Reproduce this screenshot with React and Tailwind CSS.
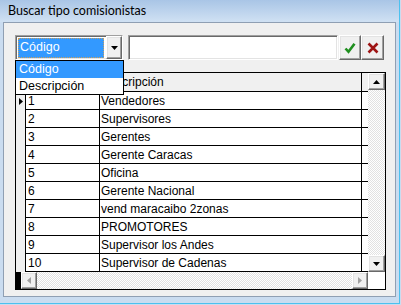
import React from 'react';

const rows = [
  ['1', 'Vendedores'],
  ['2', 'Supervisores'],
  ['3', 'Gerentes'],
  ['4', 'Gerente Caracas'],
  ['5', 'Oficina'],
  ['6', 'Gerente Nacional'],
  ['7', 'vend maracaibo 2zonas'],
  ['8', 'PROMOTORES'],
  ['9', 'Supervisor los Andes'],
  ['10', 'Supervisor de Cadenas'],
];

const sunken =
  'border border-t-[#a0a0a0] border-l-[#a0a0a0] border-b-white border-r-white shadow-[inset_1px_1px_0_#696969,inset_-1px_-1px_0_#e3e3e3]';
const raised =
  'border border-t-white border-l-white border-b-[#696969] border-r-[#696969] shadow-[inset_-1px_-1px_0_#a0a0a0,inset_1px_1px_0_#e3e3e3] bg-[#f0f0f0]';
const checker = 'bg-[repeating-conic-gradient(#ffffff_0_25%,#e2e2e2_0_50%)] bg-[length:2px_2px]';

const Tri = ({ dir, color = '#000' }) => {
  const pts = {
    up: '0,4 7,4 3.5,0',
    down: '0,0 7,0 3.5,4',
  };
  if (dir === 'left' || dir === 'right') {
    return (
      <svg width="4" height="7" viewBox="0 0 4 7">
        <polygon points={dir === 'left' ? '4,0 4,7 0,3.5' : '0,0 0,7 4,3.5'} fill={color} />
      </svg>
    );
  }
  return (
    <svg width="7" height="4" viewBox="0 0 7 4">
      <polygon points={pts[dir]} fill={color} />
    </svg>
  );
};

const App = () => {
  return (
    <div className="w-[401px] h-[305px] bg-[#cadcf0] pr-px pb-px font-['Liberation_Sans',Arial,sans-serif] text-black">
      <div className="h-full flex flex-col border-r border-b border-[#4cc1ef]">
        <div className="h-[22px] shrink-0 bg-linear-to-b from-[#a9c5e6] to-[#d0e1f3] pl-[8px] pt-[2px] text-[12.5px] leading-[17px] font-['Lato',sans-serif]">
          Buscar tipo comisionistas
        </div>
        <div className="flex-1 flex px-[3px] pb-[6px]">
          <div className="flex-1 bg-[#f0f0f0] border border-[#8f9fb3] pl-[11px] pt-[12px]">
            {/* toolbar */}
            <div className="flex h-[25px]">
              <div className={`relative w-[108px] bg-white flex ${sunken}`}>
                <div className="flex-1 ml-[2px] mt-[2px] mb-[1px] mr-[2px] bg-[#3399ff] border border-dotted border-[#c8a060] text-white text-[12.5px] leading-[17px] pl-[1px]">
                  Código
                </div>
                <div className={`w-[16px] flex items-center justify-center ${raised}`}>
                  <Tri dir="down" />
                </div>
                <div className="absolute left-[-1px] top-[24px] w-[109px] bg-white border border-black z-10 text-[12.5px]">
                  <div className="h-[17px] bg-[#3399ff] text-white leading-[17px] pl-[3px]">Código</div>
                  <div className="h-[16px] leading-[16px] pl-[3px]">Descripción</div>
                </div>
              </div>
              <div className={`ml-[5px] w-[210px] bg-white ${sunken}`} />
              <button className={`ml-[1px] w-[22px] flex items-center justify-center ${raised}`}>
                <svg width="12" height="12" viewBox="0 0 12 12">
                  <path d="M1.5 6.5 L4.5 9.8 L10.5 1.8" fill="none" stroke="#1f8f1f" strokeWidth="2.6" />
                </svg>
              </button>
              <button className={`w-[23px] flex items-center justify-center ${raised}`}>
                <svg width="12" height="12" viewBox="0 0 12 12">
                  <path d="M1.5 1.5 L10.5 10.5 M10.5 1.5 L1.5 10.5" fill="none" stroke="#9e1414" strokeWidth="2.6" />
                </svg>
              </button>
            </div>

            {/* grid */}
            <div className="mt-[12px] w-[371px] h-[218px] border border-black flex flex-col text-[12px]">
              <div className="flex flex-1 min-h-0">
                <div className="flex-1 overflow-hidden bg-white">
                  <div className="flex h-[19px] bg-[#f0f0f0] border-b border-black">
                    <div className="w-[10px] border-r border-black" />
                    <div className="w-[74px] border-r border-black" />
                    <div className="w-[262px] border-r border-black pl-[1px] leading-[18px]">Descripción</div>
                    <div className="flex-1" />
                  </div>
                  {rows.map(([code, desc], i) => (
                    <div key={code} className="flex h-[18px]">
                      <div className="w-[10px] border-r border-black bg-[#f0f0f0] flex items-center pl-[3px]">
                        {i === 0 && <Tri dir="right" />}
                      </div>
                      <div className="w-[74px] border-r border-b border-black pl-[2px] leading-[18px]">{code}</div>
                      <div className="w-[262px] border-r border-b border-black pl-[1px] leading-[18px]">{desc}</div>
                      <div className="flex-1 border-b border-black" />
                    </div>
                  ))}
                </div>
                <div className="w-[17px] flex flex-col">
                  <div className={`h-[17px] flex items-center justify-center ${raised}`}>
                    <Tri dir="up" />
                  </div>
                  <div className={`flex-1 ${checker}`} />
                  <div className={`h-[17px] flex items-center justify-center ${raised}`}>
                    <Tri dir="down" />
                  </div>
                </div>
              </div>
              <div className="flex h-[17px]">
                <div className="w-[5px] bg-black" />
                <div className={`w-[16px] flex items-center justify-center ${raised}`}>
                  <Tri dir="left" color="#a0a0a0" />
                </div>
                <div className={`flex-1 ${checker}`} />
                <div className={`w-[16px] flex items-center justify-center ${raised}`}>
                  <Tri dir="right" color="#a0a0a0" />
                </div>
                <div className="w-[17px] bg-white" />
              </div>
            </div>
          </div>
        </div>
      </div>
    </div>
  );
};

export default App;
